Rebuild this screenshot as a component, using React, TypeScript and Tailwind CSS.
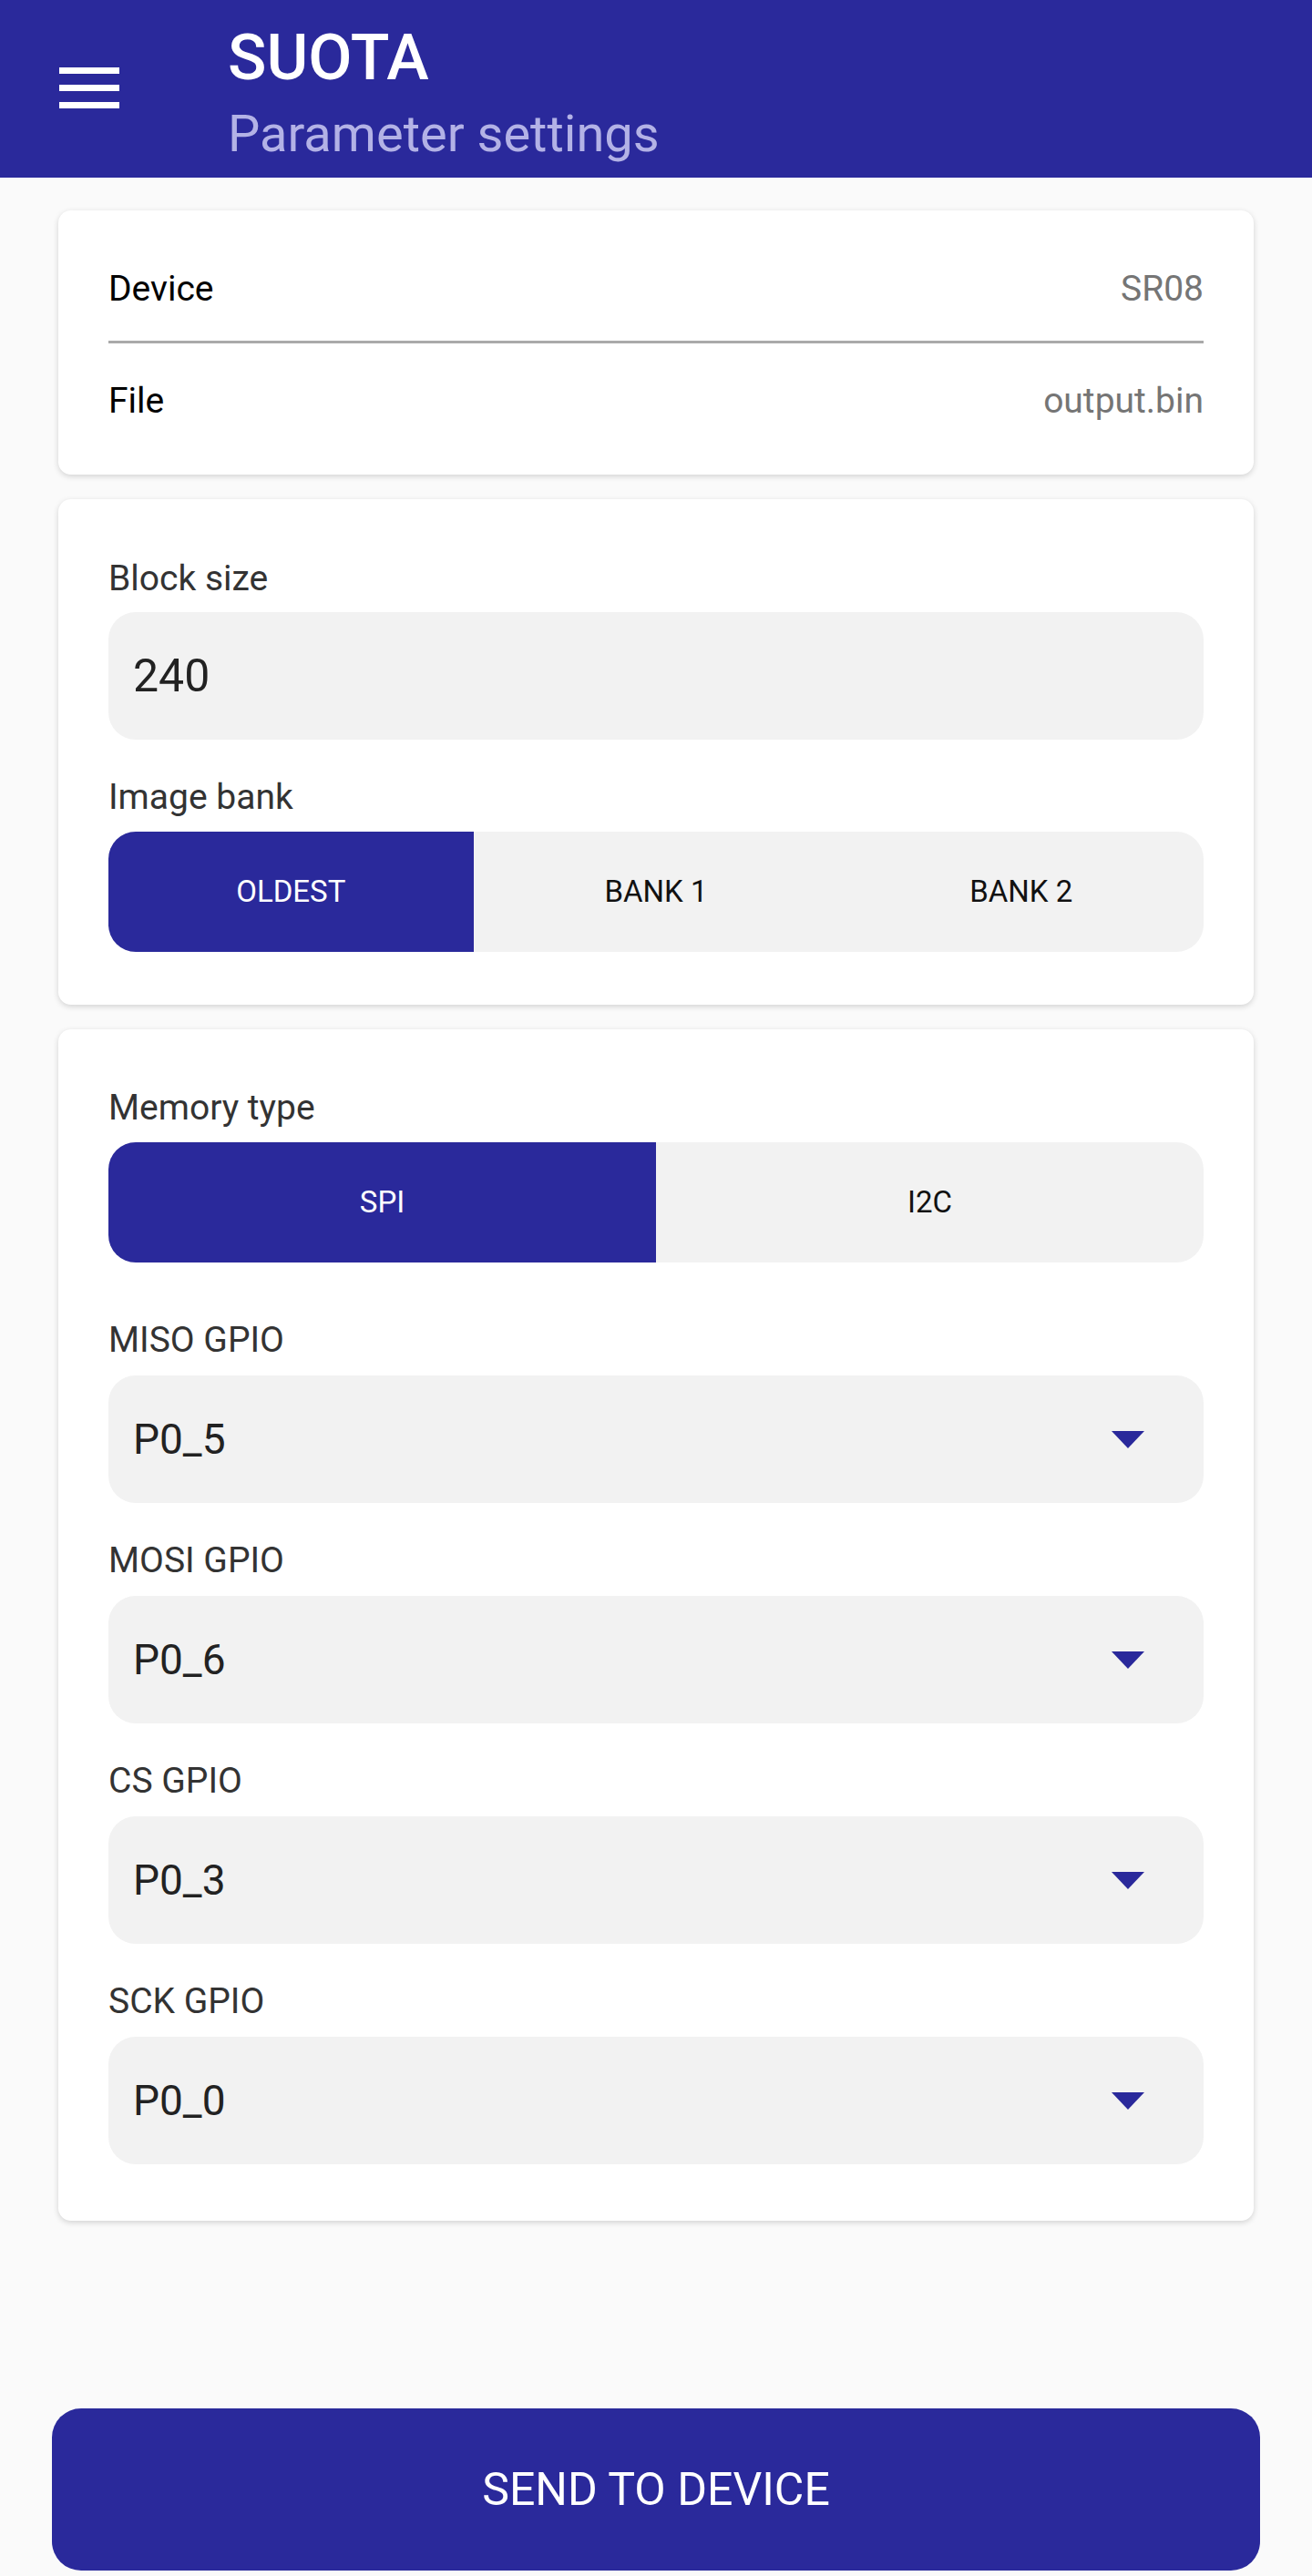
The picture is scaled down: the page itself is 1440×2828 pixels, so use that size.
import React from 'react';

const BLUE = 'bg-[#2a299b]';

const Label = ({ children }: { children: React.ReactNode }) => (
  <div className="h-[40px] flex items-center text-[39px] leading-[40px] text-[#333333]">{children}</div>
);

const Segmented = ({ options, selected }: { options: string[]; selected: number }) => (
  <div className="mt-[18px] flex h-[132px] rounded-[30px] overflow-hidden bg-[#f2f2f2]">
    {options.map((opt, i) => (
      <div
        key={opt}
        className={`flex-1 flex items-center justify-center text-[33px] ${
          i === selected ? 'bg-[#2a299b] text-white' : 'text-[#111111]'
        }`}
      >
        {opt}
      </div>
    ))}
  </div>
);

const Dropdown = ({ label, value, first }: { label: string; value: string; first?: boolean }) => (
  <div className={first ? 'mt-[65px]' : 'mt-[43px]'}>
    <Label>{label}</Label>
    <div className="mt-[19px] h-[140px] rounded-[30px] bg-[#f2f2f2] flex items-center justify-between pl-[27px] pr-[65px]">
      <span className="text-[46px] text-[#222222]">{value}</span>
      <svg width="36" height="19" viewBox="0 0 36 19">
        <path d="M0 0 L36 0 L18 19 Z" fill="#2a299b" />
      </svg>
    </div>
  </div>
);

const Card = ({ children, className = '' }: { children: React.ReactNode; className?: string }) => (
  <div className={`mx-[64px] bg-white rounded-[14px] shadow-[0_2px_6px_rgba(0,0,0,0.16)] px-[55px] ${className}`}>
    {children}
  </div>
);

export default function App() {
  return (
    <div className="min-h-[2828px] bg-[#fafafa] flex flex-col" style={{ fontFamily: 'Roboto, "Noto Sans", sans-serif' }}>
      {/* Toolbar */}
      <div className={`h-[195px] ${BLUE} flex`}>
        <div className="w-[250px] pl-[65px] pt-[74px]">
          <div className="w-[66px] flex flex-col gap-[12px]">
            <div className="h-[7px] bg-white" />
            <div className="h-[7px] bg-white" />
            <div className="h-[7px] bg-white" />
          </div>
        </div>
        <div className="pt-[21px]">
          <div className="h-[84px] leading-[84px] text-[70px] font-medium text-white">SUOTA</div>
          <div className="mt-[9px] leading-[66px] text-[56px] text-[#b3b2e6]">Parameter settings</div>
        </div>
      </div>

      {/* Device / file */}
      <Card className="mt-[36px] pt-[36px] pb-[31px]">
        <div className="h-[100px] flex items-center justify-between text-[39px]">
          <span className="text-black">Device</span>
          <span className="text-[#757575]">SR08</span>
        </div>
        <div className="mt-[7px] h-[3px] bg-[#aaaaaa]" />
        <div className="mt-[13px] h-[100px] flex items-center justify-between text-[39px]">
          <span className="text-black">File</span>
          <span className="text-[#757575]">output.bin</span>
        </div>
      </Card>

      {/* Block size / image bank */}
      <Card className="mt-[27px] pt-[67px] pb-[58px]">
        <Label>Block size</Label>
        <div className="mt-[17px] h-[140px] rounded-[30px] bg-[#f2f2f2] flex items-center pl-[27px]">
          <span className="text-[50px] text-[#222222]">240</span>
        </div>
        <div className="mt-[43px]">
          <Label>Image bank</Label>
        </div>
        <Segmented options={['OLDEST', 'BANK 1', 'BANK 2']} selected={0} />
      </Card>

      {/* Memory */}
      <Card className="mt-[27px] pt-[66px] pb-[62px]">
        <Label>Memory type</Label>
        <Segmented options={['SPI', 'I2C']} selected={0} />
        <Dropdown label="MISO GPIO" value="P0_5" first />
        <Dropdown label="MOSI GPIO" value="P0_6" />
        <Dropdown label="CS GPIO" value="P0_3" />
        <Dropdown label="SCK GPIO" value="P0_0" />
      </Card>

      <button className={`mt-auto mb-[6px] mx-[57px] h-[178px] rounded-[32px] ${BLUE} text-white text-[50px]`}>
        SEND TO DEVICE
      </button>
    </div>
  );
}
